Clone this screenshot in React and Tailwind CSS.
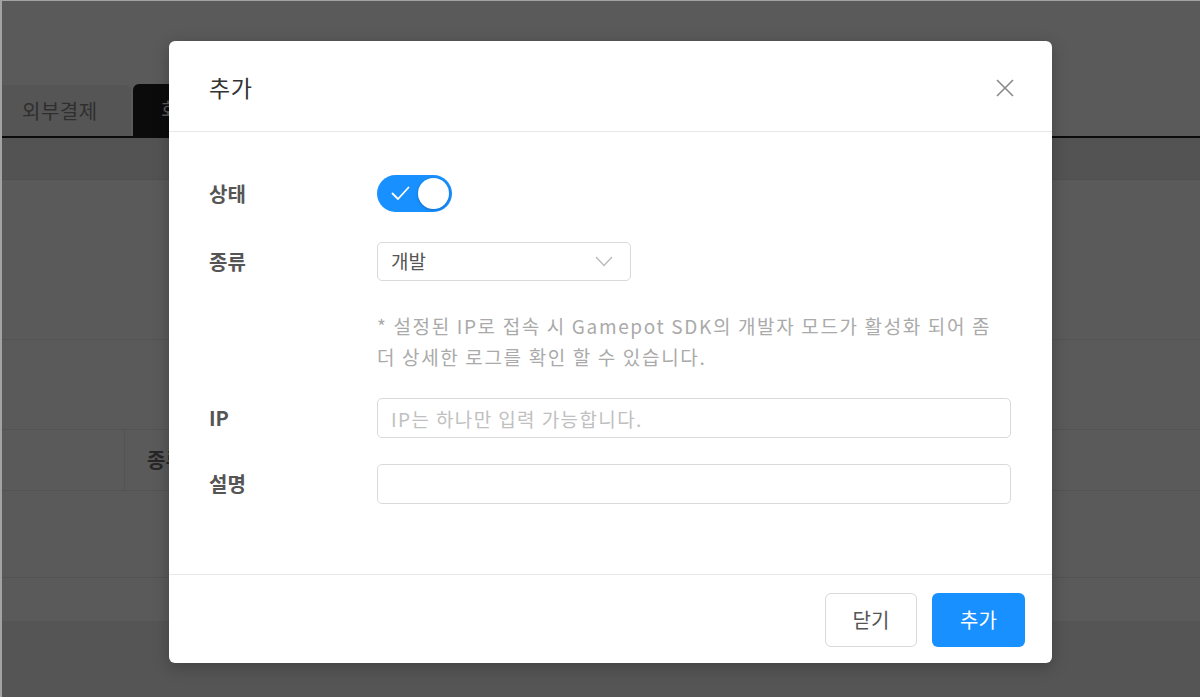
import React from 'react';

const font = { fontFamily: '"Noto Sans CJK KR", "Noto Sans", sans-serif' };

function Toggle() {
  return (
    <div className="relative w-[75px] h-[37px] rounded-full bg-[#1890ff] flex items-center">
      <svg className="absolute left-[14px] top-[11px]" width="19" height="15" viewBox="0 0 19 15" fill="none">
        <path d="M1.5 7.5 L7 13 L17.5 1.5" stroke="#fff" strokeWidth="1.8" strokeLinecap="round" strokeLinejoin="round" />
      </svg>
      <div className="absolute right-[3px] top-[3px] w-[31px] h-[31px] rounded-full bg-white shadow-[0_1px_3px_rgba(0,0,0,0.25)]" />
    </div>
  );
}

export default function App() {
  return (
    <div style={font} className="relative w-full h-[697px] overflow-hidden bg-[#5a5a5a] border-l-2 border-t border-[#a3a3a3]">
      {/* page behind the mask */}
      <div className="h-[83px]" />
      <div className="h-[52px] flex items-end">
        <div className="w-[129px] h-[51px] bg-[#555555] rounded-tr-md flex items-center pl-[20px] text-[20px] tracking-[0.5px] text-[#2f2f2f]">외부결제</div>
        <div className="ml-[2px] w-[200px] h-[52px] bg-[#0b0b0b] rounded-t-md flex items-center pl-[28px] text-[20px] text-[#5c5c5c]">회원</div>
      </div>
      <div className="h-[2px] bg-[#0b0b0b]" />
      <div className="h-[42px] bg-[#535353] border-b border-[#4f4f4f]" />
      <div className="h-[160px] border-b border-[#535353]" />
      <div className="h-[89px]" />
      <div className="h-[62px] flex border-y border-[#535353]">
        <div className="w-[123px] border-r border-[#535353]" />
        <div className="pl-[22px] flex items-center text-[20px] font-bold text-[#262626]">종류</div>
      </div>
      <div className="h-[87px] border-b border-[#535353]" />
      <div className="h-[43px]" />
      <div className="h-full bg-[#555555]" />

      {/* modal */}
      <div className="absolute left-[167px] top-[40px] w-[883px] h-[622px] bg-white rounded-[6px] shadow-[0_4px_16px_rgba(0,0,0,0.25)] flex flex-col">
        <div className="h-[91px] border-b border-[#e8e8e8] flex items-center justify-between pl-[40px] pr-[38px] pt-[3px]">
          <div className="text-[23px] tracking-[0.5px] text-[#333333]">추가</div>
          <svg width="18" height="18" viewBox="0 0 18 18" fill="none">
            <path d="M1 1 L17 17 M17 1 L1 17" stroke="#888888" strokeWidth="1.6" />
          </svg>
        </div>

        <div className="flex-1 pl-[40px] pr-[41px] pt-[43px]">
          <div className="flex items-center">
            <div className="w-[168px] text-[20px] font-bold text-[#555555]">상태</div>
            <Toggle />
          </div>

          <div className="flex items-center mt-[30px]">
            <div className="w-[168px] text-[20px] font-bold text-[#555555]">종류</div>
            <div className="w-[254px] h-[39px] border border-[#d9d9d9] rounded-[5px] flex items-center justify-between pl-[13px] pr-[17px]">
              <span className="text-[19px] text-[#555555]">개발</span>
              <svg width="18" height="11" viewBox="0 0 18 11" fill="none">
                <path d="M1 1 L9 9.5 L17 1" stroke="#bbbbbb" strokeWidth="1.4" />
              </svg>
            </div>
          </div>

          <div className="ml-[168px] mt-[29px] text-[19px] tracking-[1.65px] leading-[31px] text-[#aaaaaa] whitespace-nowrap">
            * 설정된 IP로 접속 시 Gamepot SDK의 개발자 모드가 활성화 되어 좀<br />더 상세한 로그를 확인 할 수 있습니다.
          </div>

          <div className="flex items-center mt-[26px]">
            <div className="w-[168px] text-[20px] font-bold text-[#555555]">IP</div>
            <input
              className="flex-1 h-[40px] border border-[#d9d9d9] rounded-[5px] px-[13px] text-[19px] tracking-[1.4px] outline-none placeholder:text-[#c0c0c0]"
              style={font}
              placeholder="IP는 하나만 입력 가능합니다."
            />
          </div>

          <div className="flex items-center mt-[26px]">
            <div className="w-[168px] text-[20px] font-bold text-[#555555]">설명</div>
            <input
              className="flex-1 h-[40px] border border-[#d9d9d9] rounded-[5px] px-[13px] text-[19px] outline-none"
              style={font}
            />
          </div>
        </div>

        <div className="h-[89px] border-t border-[#e8e8e8] flex items-start justify-end gap-[15px] pt-[18px] pr-[27px]">
          <button className="w-[92px] h-[54px] border border-[#d9d9d9] rounded-[6px] bg-white text-[20px] text-[#555555]" style={font}>닫기</button>
          <button className="w-[93px] h-[54px] rounded-[6px] bg-[#1890ff] text-[20px] text-white" style={font}>추가</button>
        </div>
      </div>
    </div>
  );
}
